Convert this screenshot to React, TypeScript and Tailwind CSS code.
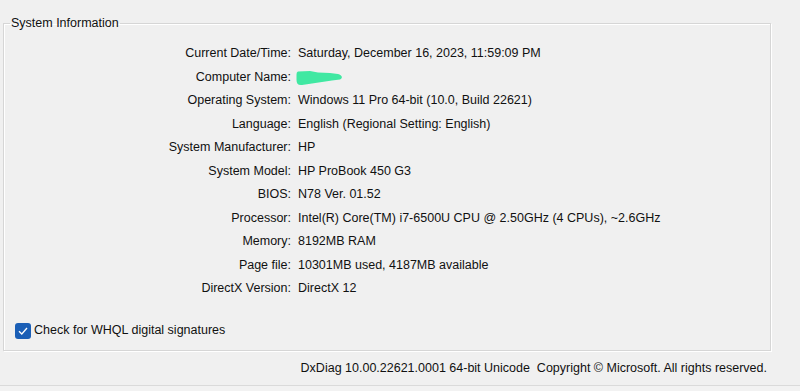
import React from "react";

const rows: [string, React.ReactNode][] = [
  ["Current Date/Time:", "Saturday, December 16, 2023, 11:59:09 PM"],
  ["Computer Name:", <Scribble key="s" />],
  ["Operating System:", "Windows 11 Pro 64-bit (10.0, Build 22621)"],
  ["Language:", "English (Regional Setting: English)"],
  ["System Manufacturer:", "HP"],
  ["System Model:", "HP ProBook 450 G3"],
  ["BIOS:", "N78 Ver. 01.52"],
  ["Processor:", "Intel(R) Core(TM) i7-6500U CPU @ 2.50GHz (4 CPUs), ~2.6GHz"],
  ["Memory:", "8192MB RAM"],
  ["Page file:", "10301MB used, 4187MB available"],
  ["DirectX Version:", "DirectX 12"],
];

function Scribble() {
  // hand-drawn marker blotting out the name
  return (
    <svg width="48" height="16" viewBox="0 0 48 16" className="block -ml-[2px] mt-[2px]">
      <path
        d="M2 1.5 L14 1 L22 2.5 L34 3 L42 4 C46.5 5 47 8.5 44 9.5 L36 10.5 L26 12 L16 13.5 L6 15 C2 15.5 0.5 13.5 0.5 10 L0.5 5 C0.5 3 1 1.8 2 1.5 Z"
        fill="#40e8a2"
      />
    </svg>
  );
}

export default function App() {
  return (
    <div
      className="w-[800px] h-[391px] bg-[#f0f0f0] text-[#111] text-[12.5px] overflow-hidden flex flex-col"
      style={{ fontFamily: '"Liberation Sans", Arial, sans-serif' }}
    >
      <fieldset className="ml-[3px] mt-[15px] w-[768px] h-[336px] border border-[#d6d6d6] shadow-[inset_1px_1px_0_#ffffff,1px_1px_0_#ffffff] pt-[11px]">
        <legend className="ml-[6px] px-[1px] leading-[16px]">System Information</legend>
        <div className="grid grid-cols-[287px_1fr] gap-x-[7px]">
          {rows.map(([label, value]) => (
            <React.Fragment key={label}>
              <div className="text-right leading-[23.5px] h-[23.5px]">{label}</div>
              <div className="leading-[23.5px] h-[23.5px] flex items-center whitespace-nowrap">{value}</div>
            </React.Fragment>
          ))}
        </div>
        <label className="mt-[22px] ml-[11px] flex items-center gap-[3px] h-[16px]">
          <span className="w-[16px] h-[16px] rounded-[3px] bg-[#1b5fb6] flex items-center justify-center">
            <svg width="10" height="8" viewBox="0 0 10 8">
              <path d="M1 4.2 L3.8 7 L9 1" fill="none" stroke="#ffffff" strokeWidth="1.3" />
            </svg>
          </span>
          <span>Check for WHQL digital signatures</span>
        </label>
      </fieldset>
      <div className="h-[34px] flex items-center justify-end pr-[33px] pt-[1px]">
        DxDiag 10.00.22621.0001 64-bit Unicode&nbsp;&nbsp;Copyright © Microsoft. All rights reserved.
      </div>
      <div className="flex-1 border-t border-[#dadada] bg-[#f2f2f2]" />
    </div>
  );
}
